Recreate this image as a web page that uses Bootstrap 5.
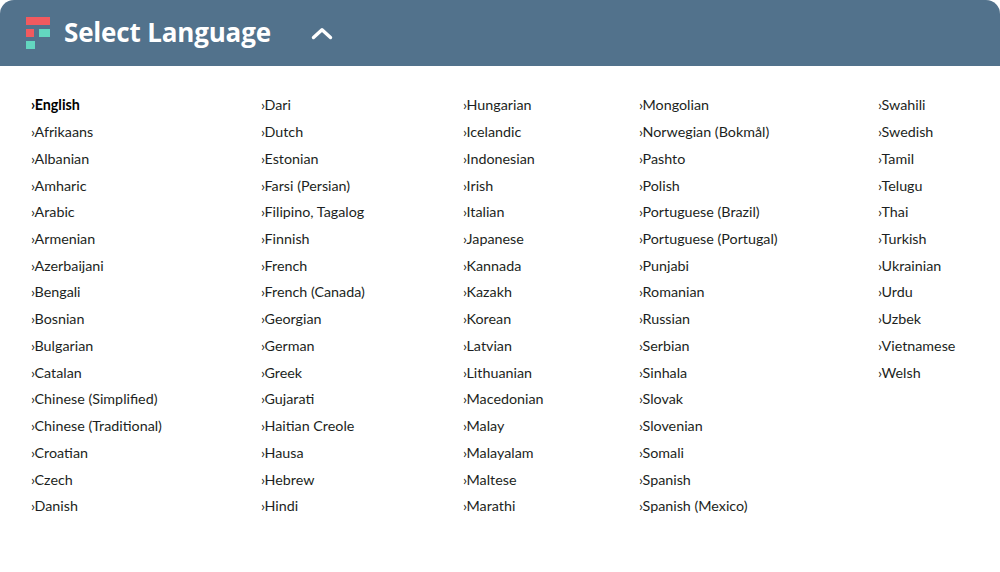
<!DOCTYPE html>
<html lang="en"><head><meta charset="utf-8">
<title>Select Language</title>
<link href="https://cdn.jsdelivr.net/npm/bootstrap@5.3.0/dist/css/bootstrap.min.css" rel="stylesheet">
<style>
html,body{height:100%;background:#fff}
body{font-family:"Lato","Noto Sans",sans-serif;color:#1c1f22;overflow:hidden}
.lang-head{height:66px;background:#52728c;border-radius:14px 14px 0 0;padding-left:26px}
.lang-title{font-family:"Open Sans","Noto Sans",sans-serif;font-size:26px;font-weight:700;color:#fff;line-height:1;margin:-2px 0 0 14px;width:247px;letter-spacing:-.17px}
.lang-grid{display:grid;grid-template-columns:230px 202px 176px 239px 1fr;padding:26.3px 0 0 31px}
.lang-list{list-style:none;margin:0;padding:0;font-size:14.3px;line-height:26.73px}
.lang-list li::before{content:"›";margin-right:-.5px}
.lang-list li.cur{font-weight:700;color:#000}
.lang-logo{display:block}
</style></head><body>
<div class="lang-head d-flex align-items-center">
<svg class="lang-logo" width="24" height="32" viewBox="0 0 24 32"><rect width="24" height="8" fill="#f25a5f"/><rect y="12" width="8" height="8" fill="#f25a5f"/><rect x="13" y="12" width="11" height="8" fill="#63d6c0"/><rect y="24" width="9" height="8" fill="#63d6c0"/></svg>
<h1 class="lang-title">Select Language</h1>
<svg width="22" height="13" viewBox="0 0 22 13"><path d="M2.500 10.500 11 2.800l8.500 7.700" fill="none" stroke="#fff" stroke-width="3.400" stroke-linecap="round" stroke-linejoin="round"/></svg>
</div>
<div class="lang-grid">
<ul class="lang-list"><li class="cur">English</li><li>Afrikaans</li><li>Albanian</li><li>Amharic</li><li>Arabic</li><li>Armenian</li><li>Azerbaijani</li><li>Bengali</li><li>Bosnian</li><li>Bulgarian</li><li>Catalan</li><li>Chinese (Simplified)</li><li>Chinese (Traditional)</li><li>Croatian</li><li>Czech</li><li>Danish</li></ul>
<ul class="lang-list"><li>Dari</li><li>Dutch</li><li>Estonian</li><li>Farsi (Persian)</li><li>Filipino, Tagalog</li><li>Finnish</li><li>French</li><li>French (Canada)</li><li>Georgian</li><li>German</li><li>Greek</li><li>Gujarati</li><li>Haitian Creole</li><li>Hausa</li><li>Hebrew</li><li>Hindi</li></ul>
<ul class="lang-list"><li>Hungarian</li><li>Icelandic</li><li>Indonesian</li><li>Irish</li><li>Italian</li><li>Japanese</li><li>Kannada</li><li>Kazakh</li><li>Korean</li><li>Latvian</li><li>Lithuanian</li><li>Macedonian</li><li>Malay</li><li>Malayalam</li><li>Maltese</li><li>Marathi</li></ul>
<ul class="lang-list"><li>Mongolian</li><li>Norwegian (Bokmål)</li><li>Pashto</li><li>Polish</li><li>Portuguese (Brazil)</li><li>Portuguese (Portugal)</li><li>Punjabi</li><li>Romanian</li><li>Russian</li><li>Serbian</li><li>Sinhala</li><li>Slovak</li><li>Slovenian</li><li>Somali</li><li>Spanish</li><li>Spanish (Mexico)</li></ul>
<ul class="lang-list"><li>Swahili</li><li>Swedish</li><li>Tamil</li><li>Telugu</li><li>Thai</li><li>Turkish</li><li>Ukrainian</li><li>Urdu</li><li>Uzbek</li><li>Vietnamese</li><li>Welsh</li></ul>
</div>
<script src="https://cdn.jsdelivr.net/npm/bootstrap@5.3.0/dist/js/bootstrap.bundle.min.js"></script>
</body></html>
